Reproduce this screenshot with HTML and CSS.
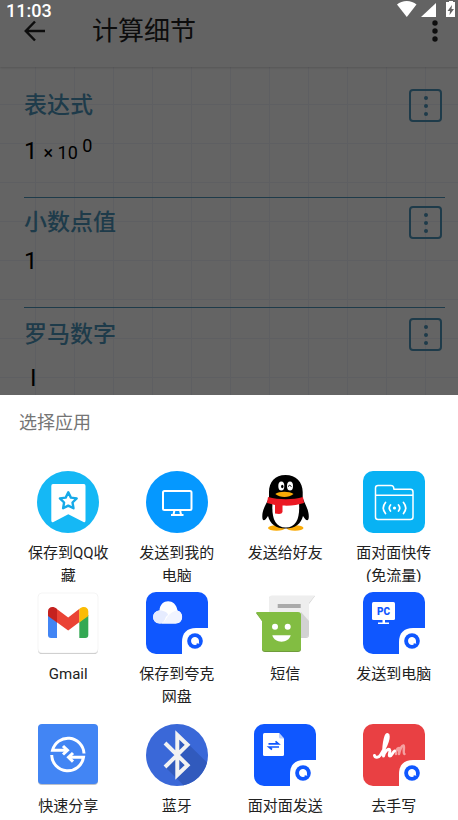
FILE: index.html
```
<!DOCTYPE html>
<html lang="zh-CN">
<head>
    <meta charset="UTF-8">
    <meta name="viewport" content="width=device-width, initial-scale=1.0">
    <title>计算细节</title>
    <link rel="stylesheet" href="styles.css">
</head>
<body>
    <!-- shared icon parts -->
    <svg class="defs" aria-hidden="true">
        <defs>
            <symbol id="dots" viewBox="0 0 24 24">
                <circle cx="12" cy="4" r="2"/><circle cx="12" cy="12" r="2"/><circle cx="12" cy="20" r="2"/>
            </symbol>
            <symbol id="quark" viewBox="0 0 62 62">
                <path d="M36 62V50C36 41 41 36 50 36H62V62Z" fill="#fff"/>
                <circle cx="49" cy="49" r="7.800" fill="#0f57ff"/>
                <path d="M53 49.500A4 4 0 1 0 49.300 53C50.800 53 51 52.200 50.600 51.300L53.500 51.800C52.800 51.200 53 50.400 53 49.500Z" fill="#fff"/>
            </symbol>
        </defs>
    </svg>

    <div class="screen">
        <div class="status">
            <span>11:03</span>
            <svg width="60" height="20" viewBox="0 0 60 20" fill="#fff" aria-hidden="true">
                <path d="M0 4.500C5-.2 14.500-.2 19.500 4.500L9.800 17Z"/>
                <path d="M39 3V17H24Z"/>
                <path d="M51 2H52V1H56V2H58V17H49V2ZM55 5L50.500 11H53L52.500 15L57 9H54.500Z" fill-rule="evenodd"/>
            </svg>
        </div>

        <main class="details">
            <header class="appbar">
                <button type="button" class="icon-btn" aria-label="返回">
                    <svg class="line" width="22" height="22" viewBox="0 0 22 22"><path d="M21 11H2M11 1.500L1.800 11L11 20.500"/></svg>
                </button>
                <h1>计算细节</h1>
                <button type="button" class="icon-btn" aria-label="更多">
                    <svg width="30" height="24" viewBox="0 0 30 24"><circle cx="15" cy="4" r="2.700"/><circle cx="15" cy="12" r="2.700"/><circle cx="15" cy="20" r="2.700"/></svg>
                </button>
            </header>
            <section class="entry first">
                <div class="entry-head">
                    <h2>表达式</h2>
                    <button type="button" class="menu-btn" aria-label="表达式选项"><svg width="24" height="24"><use href="#dots"/></svg></button>
                </div>
                <p>1 <small>× 10 <sup>0</sup></small></p>
            </section>
            <section class="entry">
                <div class="entry-head">
                    <h2>小数点值</h2>
                    <button type="button" class="menu-btn" aria-label="小数点值选项"><svg width="24" height="24"><use href="#dots"/></svg></button>
                </div>
                <p>1</p>
            </section>
            <section class="entry last">
                <div class="entry-head">
                    <h2>罗马数字</h2>
                    <button type="button" class="menu-btn" aria-label="罗马数字选项"><svg width="24" height="24"><use href="#dots"/></svg></button>
                </div>
                <p>I</p>
            </section>
            <div class="scrim"></div>
        </main>

        <section class="sheet">
            <h2>选择应用</h2>
            <div class="apps">
                <button type="button" class="app">
                    <svg viewBox="0 0 62 62">
                        <circle cx="31" cy="31" r="31" fill="#15b8f5"/>
                        <path d="M16 13H47Q48.500 13 48.500 15V49.500Q48.500 52 46.500 51L31.300 43.300L16.500 51Q14.300 52 14.300 49.500V15Q14.300 13 16 13Z" fill="#fff"/>
                        <path d="M31.300 21.300L33.900 26.600L39.700 27.400L35.500 31.500L36.500 37.300L31.300 34.600L26.100 37.300L27.100 31.500L22.900 27.400L28.700 26.600Z" fill="none" stroke="#15a9e8" stroke-width="2.400" stroke-linejoin="round"/>
                    </svg>
                    <span>保存到QQ收藏</span>
                </button>
                <button type="button" class="app">
                    <svg viewBox="0 0 62 62">
                        <circle cx="31" cy="31" r="31" fill="#0598ff"/>
                        <g fill="none" stroke="#fff" stroke-width="2">
                            <rect x="17" y="20" width="28.500" height="19" rx="1.500"/>
                            <path d="M28.500 39L27.500 43.500M34 39L35 43.500M25 44H37.500"/>
                        </g>
                    </svg>
                    <span>发送到我的电脑</span>
                </button>
                <button type="button" class="app">
                    <svg viewBox="0 0 62 62">
                        <ellipse cx="22.500" cy="57" rx="8.500" ry="2.800" fill="#faab07"/>
                        <ellipse cx="41" cy="57" rx="8.500" ry="2.800" fill="#faab07"/>
                        <path d="M31.500 4C21 4 15 11 15 21V27C12 33 8 39 8.300 46C8.500 51 11 50 14 45C16 53 22 57.500 31.500 57.500C41 57.500 47 53 49 45C52 50 54.500 51 54.800 46C55 39 51 33 48.700 27V21C48.700 11 42 4 31.500 4Z"/>
                        <path d="M18.500 32H45C46 46 43 56.500 31.800 56.500C20.500 56.500 17.500 46 18.500 32Z" fill="#fff"/>
                        <path d="M14 26C25 29 39 29 49 26L50 32C44 34 36 35 28.500 34.500V41Q28 43 25 43L21 42.500V34L13 32Z" fill="#eb1923"/>
                        <ellipse cx="27.300" cy="15" rx="3" ry="4.500" fill="#fff"/>
                        <ellipse cx="36" cy="15" rx="3" ry="4.500" fill="#fff"/>
                        <ellipse cx="28.300" cy="15.500" rx="1.200" ry="1.800"/>
                        <path d="M34 15.500Q35.500 13 37.500 15.500" fill="none" stroke="#000" stroke-width="1"/>
                        <path d="M21.300 23C25 20 35.500 20 39.500 23C35 27 26 27 21.300 23Z" fill="#faab07"/>
                    </svg>
                    <span>发送给好友</span>
                </button>
                <button type="button" class="app">
                    <svg viewBox="0 0 62 62">
                        <rect width="62" height="62" rx="10" fill="#08b2f4"/>
                        <g fill="none" stroke="#fff" stroke-width="1.500" stroke-linecap="round">
                            <path d="M12.500 46V17Q12.500 14.500 15 14.500H28Q30 14.500 30.500 16L31 18.300H47.500Q50 18.300 50 21V46Q50 48.500 47.500 48.500H15Q12.500 48.500 12.500 46ZM12.500 24.300H50"/>
                            <path d="M27.500 34Q25 37 27.500 40M35.500 34Q38 37 35.500 40M22.500 31.500Q18 37 22.500 42.500M40.500 31.500Q45 37 40.500 42.500" stroke-width="1.700"/>
                        </g>
                        <circle cx="31.500" cy="37" r="1.600" fill="#fff"/>
                    </svg>
                    <span>面对面快传(免流量)</span>
                </button>
                <button type="button" class="app">
                    <svg viewBox="0 0 62 62">
                        <rect x="1" y="2" width="60" height="60" rx="4" fill="#c4c4c4"/>
                        <rect x="1" y="1" width="60" height="60" rx="4" fill="#fff" stroke="#eee" stroke-width=".6"/>
                        <path d="M11 23L20 30V46H14Q11 46 11 43Z" fill="#4285f4"/>
                        <path d="M51.300 23L42.300 30V46H48.300Q51.300 46 51.300 43Z" fill="#34a853"/>
                        <path d="M19.500 16.700L31.200 25.500L42.500 16.700V30L31.200 38.500L19.500 30Z" fill="#ea4335"/>
                        <path d="M11 24V19.500C11 15 16 13.500 20 17V30.500Z" fill="#c5221f"/>
                        <path d="M51.300 24V19.500C51.300 15 46.300 13.500 42.300 17V30.500Z" fill="#fbbc04"/>
                    </svg>
                    <span>Gmail</span>
                </button>
                <button type="button" class="app">
                    <svg viewBox="0 0 62 62">
                        <rect width="62" height="62" rx="10" fill="#0f57ff"/>
                        <path d="M14 31.500C5 31.500 5 19 13.500 18.500C14 6 30 6 31.500 18.500C38 20 38 31.500 29.500 31.500Z" fill="#fff"/>
                        <path d="M14 31.500C5 31.500 5 19 13.500 18.500C19 18.500 22 21 22 23C18 25 20 31 14 31.500Z" fill="#e6ecff"/>
                        <path d="M15 31.500C21 30 20 21 31 18.500C38 20 38 31.500 29.500 31.500Z" fill="#f1f4ff"/>
                        <use href="#quark"/>
                    </svg>
                    <span>保存到夸克网盘</span>
                </button>
                <button type="button" class="app">
                    <svg viewBox="0 0 62 62">
                        <path d="M18 4H61L55 12V43Q55 46 52 46H18Q15 46 15 43V7Q15 4 18 4Z" fill="#d0d0d0"/>
                        <path d="M18 3.500H61L55 11V42Q55 45 52 45H18Q15 45 15 42V6.500Q15 3.500 18 3.500Z" fill="#eee"/>
                        <path d="M47 20L55 29V42Q55 45 52 45H47Z" fill="#d2d2d2"/>
                        <path d="M23.700 12H46.700V16H23.700Z" fill="#aaa"/>
                        <path d="M2 21H44Q47 21 47 24V57Q47 60 44 60H11Q8 60 8 57V29Z" fill="#6f9c3b"/>
                        <path d="M2 20H44Q47 20 47 23V56Q47 59 44 59H11Q8 59 8 56V29Z" fill="#82bd42"/>
                        <circle cx="21" cy="34.700" r="3" fill="#fff"/><circle cx="33.700" cy="34.700" r="3" fill="#fff"/>
                        <path d="M18.300 43.300H36.700C34.500 51.800 20.500 51.800 18.300 43.300Z" fill="#fff"/>
                    </svg>
                    <span>短信</span>
                </button>
                <button type="button" class="app">
                    <svg viewBox="0 0 62 62">
                        <rect width="62" height="62" rx="10" fill="#0f57ff"/>
                        <rect x="9" y="10" width="23" height="18" rx="1.500" fill="#fff"/>
                        <path d="M19.500 28H22V30.500H26V32H15V30.500H19.500Z" fill="#fff"/>
                        <text x="20.500" y="23" class="pc">PC</text>
                        <use href="#quark"/>
                    </svg>
                    <span>发送到电脑</span>
                </button>
                <button type="button" class="app">
                    <svg viewBox="0 0 62 62">
                        <rect x="1" y="1" width="60" height="60" rx="4" fill="#b9bfca"/>
                        <rect x="1" y="0" width="60" height="60" rx="4" fill="#4285f4"/>
                        <g fill="none" stroke="#fff" stroke-width="3">
                            <path d="M47 29.500A16 16 0 0 0 15.500 26.300H29"/>
                            <path d="M14.700 31A16 16 0 0 0 46.500 33.300H33"/>
                            <path d="M26 22L30.500 26.300L26 30.500M36 29L31.500 33.300L36 37.600"/>
                        </g>
                    </svg>
                    <span>快速分享</span>
                </button>
                <button type="button" class="app">
                    <svg viewBox="0 0 62 62">
                        <circle cx="31" cy="31" r="31" fill="#3a68d8"/>
                        <path d="M31 9L61 38.500A31 31 0 0 1 37.500 61.300L19 43L31 31Z" fill="#315abd"/>
                        <path d="M19 19L41.500 41.200L31.300 51V11L41.500 20.800L19 43" fill="none" stroke="#f2f2f2" stroke-width="4"/>
                    </svg>
                    <span>蓝牙</span>
                </button>
                <button type="button" class="app">
                    <svg viewBox="0 0 62 62">
                        <rect width="62" height="62" rx="10" fill="#0f57ff"/>
                        <path d="M10.500 9H25L30 14.500V30.500Q30 32 28.500 32H10.500Q9 32 9 30.500V10.500Q9 9 10.500 9Z" fill="#fff"/>
                        <path d="M25 9L30 14.500H26.500Q25 14.500 25 13Z" fill="#bdd0ff"/>
                        <path d="M14.500 19.800H24.500L21.500 17.300M25 23H15L18 25.500" fill="none" stroke="#0f57ff" stroke-width="1.700"/>
                        <use href="#quark"/>
                    </svg>
                    <span>面对面发送</span>
                </button>
                <button type="button" class="app">
                    <svg viewBox="0 0 62 62">
                        <rect width="62" height="62" rx="10" fill="#e94043"/>
                        <g fill="none" stroke="#fff" stroke-linecap="round" stroke-linejoin="round">
                            <path d="M33 30C32 28 34 24 36 24L36 30C37 25 39 21 40.500 21.500C42 22 39.500 29 41.500 30" stroke="#f5a0a0" stroke-width="2.500"/>
                            <path d="M11.500 31.500C12 34 15.500 34 17.500 31C21 26 26.500 15 25 11C23.500 8 20.500 17 20.500 32C22 27 25 24.500 26.500 25.500C28 27 25 32 27 32C29 32 29.500 28 31.500 27" stroke-width="3"/>
                        </g>
                        <use href="#quark"/>
                    </svg>
                    <span>去手写</span>
                </button>
            </div>
        </section>
    </div>
</body>
</html>
```
FILE: styles.css
```
* {
    box-sizing: border-box;
}
body {
    margin: 0;
    font-family: Roboto, "Noto Sans CJK SC", sans-serif;
    background: #fff;
}
h1, h2, p {
    margin: 0;
}
button {
    padding: 0;
    border: none;
    background: none;
    font-family: inherit;
    color: inherit;
    cursor: pointer;
}
svg {
    display: block;
}
.defs {
    position: absolute;
    width: 0;
    height: 0;
}
.screen {
    position: relative;
    display: flex;
    flex-direction: column;
    height: 100vh;
    overflow: hidden;
}

/* status bar sits over the app bar */
.status {
    position: absolute;
    top: 0;
    left: 0;
    right: 0;
    z-index: 2;
    display: flex;
    align-items: flex-start;
    justify-content: space-between;
    padding: 0 1px 0 6px;
    color: #fff;
    font-size: 18px;
    font-weight: 500;
    line-height: 21px;
}

/* page behind the sheet */
.details {
    position: relative;
    flex: 1;
    min-height: 0;
    overflow: hidden;
    background-color: #fafafa;
    background-image:
        linear-gradient(90deg, #ecedf4 1px, transparent 1px),
        linear-gradient(#ecedf4 1px, transparent 1px);
    background-size: 39px 39px;
    background-position: 35px 26px;
}
.scrim {
    position: absolute;
    inset: 0;
    background: rgba(0, 0, 0, 0.6);
}
.appbar {
    display: flex;
    align-items: center;
    height: 67px;
    padding: 0 8px 6px 24px;
    background: #f8f8f8;
    box-shadow: 0 1px 2px rgba(0, 0, 0, 0.15);
    color: #222;
}
.appbar h1 {
    flex: 1;
    margin-left: 46px;
    font-size: 26px;
    font-weight: 400;
    line-height: 36px;
}
.entry {
    margin: 0 13px 0 24px;
    padding: 8px 0 32px;
    border-bottom: 1px solid #4d94b8;
}
.entry.first {
    padding: 22px 0 30px;
}
.entry.last {
    padding-top: 10px;
    border-bottom: none;
}
.entry-head {
    display: flex;
    align-items: center;
    justify-content: space-between;
    padding-right: 3px;
    color: #4d94b8;
}
.entry-head h2 {
    font-size: 23px;
    font-weight: 500;
    line-height: 32px;
}
.menu-btn {
    display: flex;
    align-items: center;
    justify-content: center;
    width: 33px;
    height: 33px;
    border: 2px solid #4d94b8;
    border-radius: 4px;
}
.icon-btn svg,
.menu-btn svg {
    fill: currentColor;
}
.icon-btn .line {
    fill: none;
    stroke: currentColor;
    stroke-width: 2.5;
}
.entry p {
    margin-top: 8px;
    font-size: 24px;
    line-height: 28px;
}
.entry.first p {
    margin-top: 15px;
}
.entry.last p {
    margin-top: 13px;
    padding-left: 6px;
}
.entry small {
    font-size: 18px;
}
.entry sup {
    font-size: 18px;
    line-height: 0;
}

/* share sheet */
.sheet {
    position: relative;
    background: #fff;
}
.sheet h2 {
    padding-left: 19px;
    color: #757575;
    font-size: 18px;
    font-weight: 400;
    line-height: 56px;
}
.apps {
    display: grid;
    grid-template-columns: repeat(4, 1fr);
    grid-template-rows: 121px 132px auto;
    padding: 20px 10px 2px 14px;
}
.app {
    display: flex;
    flex-direction: column;
    align-items: center;
    max-height: 111px;
    overflow: hidden;
    color: #212121;
}
.app svg {
    flex: none;
    width: 62px;
    height: 62px;
}
.app span {
    width: 84px;
    margin-top: 9px;
    font-size: 15px;
    line-height: 23px;
}
.pc {
    fill: #0f57ff;
    font-family: Roboto, sans-serif;
    font-size: 10px;
    font-weight: 900;
    text-anchor: middle;
}
```
